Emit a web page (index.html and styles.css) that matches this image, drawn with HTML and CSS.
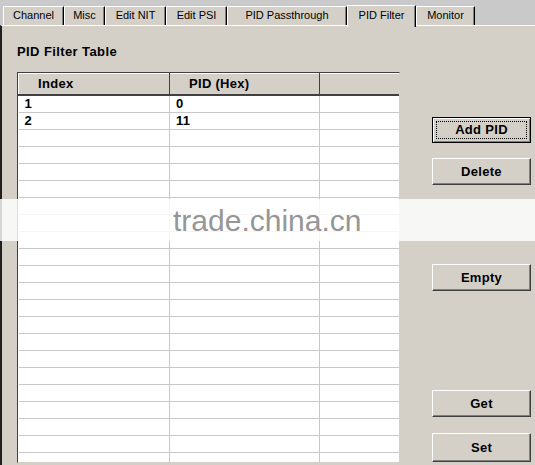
FILE: index.html
```html
<!DOCTYPE html>
<html lang="en">
<head>
    <meta charset="UTF-8">
    <title>PID Filter</title>
    <link rel="stylesheet" href="styles.css">
</head>
<body>
    <!-- tab strip -->
    <div class="tabs">
        <div class="tab">Channel</div>
        <div class="tab">Misc</div>
        <div class="tab">Edit NIT</div>
        <div class="tab">Edit PSI</div>
        <div class="tab">PID Passthrough</div>
        <div class="tab active">PID Filter</div>
        <div class="tab">Monitor</div>
    </div>

    <div class="panel">
        <div class="table-col">
            <h3 class="group-title">PID Filter Table</h3>
            <div class="listview">
                <table id="pidTable">
                    <thead>
                        <tr>
                            <th class="col-index">Index</th>
                            <th class="col-pid">PID (Hex)</th>
                            <th class="col-rest"></th>
                        </tr>
                    </thead>
                    <tbody></tbody>
                </table>
            </div>
        </div>

        <div class="button-col">
            <button class="btn btn-default add-pid"><span>Add PID</span></button>
            <button class="btn delete">Delete</button>
            <button class="btn empty">Empty</button>
            <button class="btn get">Get</button>
            <button class="btn set">Set</button>
        </div>
    </div>

    <div class="watermark">trade.china.cn</div>

    <script>
        // fill the list with the current entries plus blank grid rows
        const entries = [['1', '0'], ['2', '11']];
        const tbody = document.querySelector('#pidTable tbody');
        for (let i = 0; i < 24; i++) {
            const row = document.createElement('tr');
            const item = entries[i] || ['', ''];
            row.innerHTML = '<td>' + item[0] + '</td><td>' + item[1] + '</td><td></td>';
            tbody.appendChild(row);
        }
    </script>
</body>
</html>
```

FILE: styles.css
```css
body {
    margin: 0;
    width: 535px;
    height: 465px;
    overflow: hidden;
    position: relative;
    background-color: #d4d0c8;
    font-family: "Liberation Sans", Arial, sans-serif;
    color: #000;
}

/* Tab strip */
.tabs {
    display: flex;
    align-items: flex-end;
    height: 25px;
    padding-left: 3px;
    background-color: #c9c9c9;
}
.tab {
    box-sizing: border-box;
    height: 19px;
    background-color: #d4d0c8;
    border-top: 1px solid #fff;
    border-left: 1px solid #fff;
    border-right: 1px solid #000;
    box-shadow: inset -1px 0 #808080;
    font-size: 11px;
    line-height: 17px;
    text-align: center;
    white-space: nowrap;
}
.tab:nth-child(1) { width: 61px; }
.tab:nth-child(2) { width: 41px; }
.tab:nth-child(3) { width: 61px; }
.tab:nth-child(4) { width: 61px; }
.tab:nth-child(5) { width: 120px; }
.tab:nth-child(6) { width: 69px; }
.tab:nth-child(7) { width: 59px; }
.tab.active {
    position: relative;
    z-index: 1;
    height: 22px;
    margin-bottom: -2px;
    line-height: 19px;
}

/* Page body */
.panel {
    box-sizing: border-box;
    height: 440px;
    display: grid;
    grid-template-columns: 383px 99px;
    column-gap: 32px;
    padding: 19px 0 0 15px;
    border-top: 1px solid #fff;
    border-left: 2px solid #202020;
}
.group-title {
    margin: 0 0 13px 0;
    font-size: 13px;
    line-height: 14px;
    letter-spacing: 0.4px;
    font-weight: bold;
}

/* List view */
.listview {
    box-sizing: border-box;
    height: 391px;
    overflow: hidden;
    background-color: #fff;
    border-top: 1px solid #404040;
    border-left: 1px solid #404040;
    border-right: 1px solid #d4d0c8;
    border-bottom: 1px solid #d4d0c8;
}
.listview table {
    border-collapse: collapse;
    table-layout: fixed;
    width: 383px;
    font-size: 13px;
    letter-spacing: 0.3px;
    font-weight: bold;
}
.listview th {
    box-sizing: border-box;
    height: 21px;
    padding: 0 0 0 19px;
    text-align: left;
    background-color: #d4d0c8;
    border-top: 1px solid #fff;
    border-left: 1px solid #fff;
    border-right: 1px solid #404040;
    border-bottom: 2px solid #404040;
}
.col-index { width: 151px; }
.col-pid { width: 150px; }
.listview td {
    height: 16px;
    padding: 0 0 0 6px;
    border-bottom: 1px solid #c8c8c8;
    border-right: 1px solid #c8c8c8;
    line-height: 16px;
}

/* Buttons */
.button-col {
    display: flex;
    flex-direction: column;
}
.btn {
    box-sizing: border-box;
    width: 99px;
    height: 27px;
    padding: 0;
    background-color: #d4d0c8;
    border: 1px solid;
    border-color: #fff #404040 #404040 #fff;
    box-shadow: inset -1px -1px #808080;
    font-family: "Liberation Sans", Arial, sans-serif;
    font-size: 13px;
    letter-spacing: 0.3px;
    font-weight: bold;
    color: #000;
}
.btn-default {
    border: 1px solid #000;
    box-shadow: inset 1px 1px #fff, inset -1px -1px #808080;
}
.btn-default span {
    display: block;
    margin: 3px;
    line-height: 16px;
    border: 1px dotted #000;
}
.add-pid { margin-top: 72px; height: 26px; }
.delete { margin-top: 15px; }
.empty { margin-top: 79px; }
.get { margin-top: 99px; }
.set { margin-top: 16px; height: 29px; }

/* Site mark laid over the window */
.watermark {
    position: absolute;
    left: 0;
    top: 199px;
    width: 535px;
    height: 42px;
    padding-left: 173px;
    box-sizing: border-box;
    background-color: rgba(255, 255, 255, 0.82);
    color: #969696;
    font-family: "Liberation Sans", Arial, sans-serif;
    font-size: 30px;
    line-height: 44px;
}
```
